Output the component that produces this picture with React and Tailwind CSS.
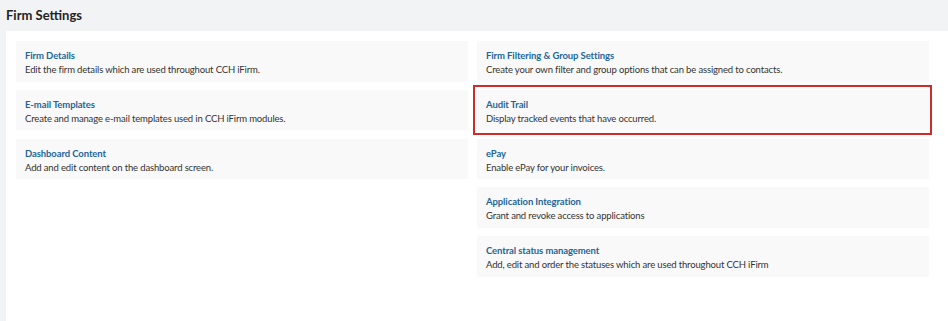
import React from "react";

const left = [
  ["Firm Details", "Edit the firm details which are used throughout CCH iFirm."],
  ["E-mail Templates", "Create and manage e-mail templates used in CCH iFirm modules."],
  ["Dashboard Content", "Add and edit content on the dashboard screen."],
];
const right = [
  ["Firm Filtering & Group Settings", "Create your own filter and group options that can be assigned to contacts."],
  ["Audit Trail", "Display tracked events that have occurred.", true],
  ["ePay", "Enable ePay for your invoices."],
  ["Application Integration", "Grant and revoke access to applications"],
  ["Central status management", "Add, edit and order the statuses which are used throughout CCH iFirm"],
];

function Card({ title, desc, hl }) {
  return (
    <div className="relative h-[40.5px] bg-[#f9f9f9] px-[9px] pt-[8px]">
      <div className="text-[9.5px] leading-[14px] font-bold text-[#1d6699] tracking-[-0.1px]">{title}</div>
      <div className="text-[9.5px] leading-[14px] text-[#333333] tracking-[-0.15px]">{desc}</div>
      {hl && (
        <div className="absolute left-[-4px] right-[-3px] top-[-4.5px] bottom-[-5px] border-2 border-[#cf2b2b]" />
      )}
    </div>
  );
}

export default function App() {
  return (
    <div className="w-[948px] h-[321px] bg-[#f2f3f5] flex flex-col" style={{ fontFamily: "Lato, 'Noto Sans', sans-serif" }}>
      <div className="h-[31px] pl-[6px] flex items-center text-[13px] font-bold text-[#232323]">Firm Settings</div>
      <div className="flex-1 ml-[6px] bg-white pl-[10px] pr-[19px] pt-[10px] grid grid-cols-2 gap-x-[9px] items-start">
        <div className="flex flex-col gap-[8.25px]">
          {left.map(([t, d]) => <Card key={t} title={t} desc={d} />)}
        </div>
        <div className="flex flex-col gap-[8.25px]">
          {right.map(([t, d, h]) => <Card key={t} title={t} desc={d} hl={h} />)}
        </div>
      </div>
    </div>
  );
}
